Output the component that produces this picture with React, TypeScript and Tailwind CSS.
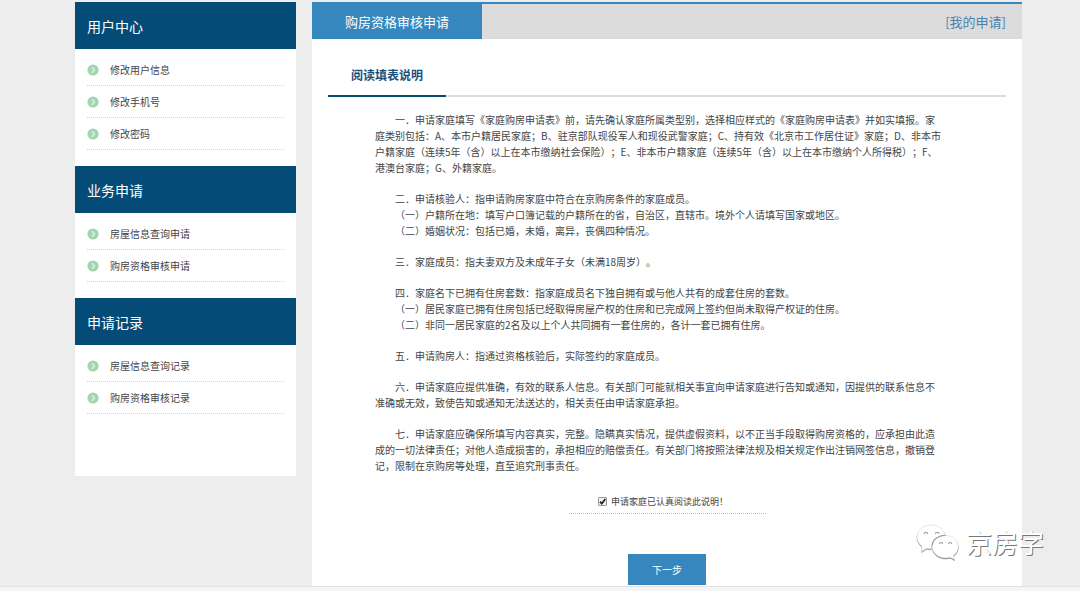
import React from "react";

const sections = [
  { title: "用户中心", items: ["修改用户信息", "修改手机号", "修改密码"] },
  { title: "业务申请", items: ["房屋信息查询申请", "购房资格审核申请"] },
  { title: "申请记录", items: ["房屋信息查询记录", "购房资格审核记录"] },
];

type Line = { text: string; indent?: boolean };

const paragraphs: Line[][] = [
  [
    { text: "一．申请家庭填写《家庭购房申请表》前，请先确认家庭所属类型别，选择相应样式的《家庭购房申请表》并如实填报。家", indent: true },
    { text: "庭类别包括：A、本市户籍居民家庭；B、驻京部队现役军人和现役武警家庭；C、持有效《北京市工作居住证》家庭；D、非本市" },
    { text: "户籍家庭（连续5年（含）以上在本市缴纳社会保险）；E、非本市户籍家庭（连续5年（含）以上在本市缴纳个人所得税）；F、" },
    { text: "港澳台家庭；G、外籍家庭。" },
  ],
  [
    { text: "二．申请核验人：指申请购房家庭中符合在京购房条件的家庭成员。", indent: true },
    { text: "（一）户籍所在地：填写户口簿记载的户籍所在的省，自治区，直辖市。境外个人请填写国家或地区。", indent: true },
    { text: "（二）婚姻状况：包括已婚，未婚，离异，丧偶四种情况。", indent: true },
  ],
  [{ text: "三．家庭成员：指夫妻双方及未成年子女（未满18周岁）。", indent: true }],
  [
    { text: "四．家庭名下已拥有住房套数：指家庭成员名下独自拥有或与他人共有的成套住房的套数。", indent: true },
    { text: "（一）居民家庭已拥有住房包括已经取得房屋产权的住房和已完成网上签约但尚未取得产权证的住房。", indent: true },
    { text: "（二）非同一居民家庭的2名及以上个人共同拥有一套住房的，各计一套已拥有住房。", indent: true },
  ],
  [{ text: "五．申请购房人：指通过资格核验后，实际签约的家庭成员。", indent: true }],
  [
    { text: "六．申请家庭应提供准确，有效的联系人信息。有关部门可能就相关事宜向申请家庭进行告知或通知，因提供的联系信息不", indent: true },
    { text: "准确或无效，致使告知或通知无法送达的，相关责任由申请家庭承担。" },
  ],
  [
    { text: "七．申请家庭应确保所填写内容真实，完整。隐瞒真实情况，提供虚假资料，以不正当手段取得购房资格的，应承担由此造", indent: true },
    { text: "成的一切法律责任；对他人造成损害的，承担相应的赔偿责任。有关部门将按照法律法规及相关规定作出注销网签信息，撤销登" },
    { text: "记，限制在京购房等处理，直至追究刑事责任。" },
  ],
];

function Bullet() {
  return (
    <svg viewBox="0 0 12 12" className="h-3 w-3 shrink-0" aria-hidden="true">
      <circle cx="6" cy="6" r="5.6" fill="#a0d6b0" />
      <path d="M4.8 3.2 7.6 6 4.8 8.8" fill="none" stroke="#e4f4e8" strokeWidth="1.2" />
    </svg>
  );
}

function Sidebar() {
  return (
    <nav className="w-[221px] shrink-0 self-start bg-white pb-[46px]">
      {sections.map((section) => (
        <section key={section.title}>
          <h2 className="flex h-[47px] items-center bg-[#054b77] px-3 text-sm text-white">{section.title}</h2>
          <ul className="px-3 pt-[5px] pb-4">
            {section.items.map((item) => (
              <li key={item} className="border-b border-dotted border-[#d4d4d4]">
                <a href="#" className="flex h-[31px] items-center gap-[11px] text-[10px] text-[#444]">
                  <Bullet />
                  {item}
                </a>
              </li>
            ))}
          </ul>
        </section>
      ))}
    </nav>
  );
}

function Watermark() {
  return (
    <div className="absolute right-9 bottom-[30px] flex items-center gap-1.5" aria-label="京房字">
      <svg viewBox="0 0 44 38" className="h-[38px] w-11 overflow-visible" aria-hidden="true">
        <g fill="#fff" stroke="#d8d8d8" strokeWidth=".6">
          <path
            d="M15 2C7.5 2 1 7 1 14c0 4 2.200 7.200 5 9.300L5.500 28.500l5.300-3.200c1.600.4 3 .6 4.600.5C15 17.500 21 12.500 29.500 12.500 28 6 22 2 15 2Z"
            className="drop-shadow-[0px_1px_0px_#999]"
          />
          <path
            d="M29.500 12.500c-7.300 0-13.200 5-13.200 11.200s5.900 11.200 13.200 11.200c1.700 0 3.300-.3 4.700-.7l4.300 2.300-1.200-4c3-2.100 5-5.200 5-8.800 0-6.200-5.600-11.200-12.800-11.200Z"
            className="drop-shadow-[0px_1px_0px_#888]"
          />
        </g>
        <g fill="none" stroke="#999" strokeWidth="1.1">
          <path d="M16.300 22c.3-5.500 6-9.500 13.200-9.700M8 11c.2-2.300 3.400-2.300 3.600 0M19.500 11c.2-2.300 3.400-2.300 3.600 0" />
          <path d="M23.500 21c.2-2 3-2 3.200 0M32.500 21c.2-2 3-2 3.200 0" />
        </g>
      </svg>
      <span className="text-[26px] leading-8 text-white [text-shadow:1px_1px_0px_#777]">京房字</span>
    </div>
  );
}

export default function App() {
  return (
    <div className="relative bg-[#f5f5f5] pb-1 font-['Noto_Sans_CJK_SC',sans-serif] [text-spacing-trim:space-all]">
      <div className="flex gap-4 border-b border-[#e2e2e2] bg-[#ededed] pt-0.5 pr-[58px] pl-[75px]">
        <Sidebar />
        <main className="min-w-0 flex-1 bg-white">
          <header className="flex h-[37px] justify-between border-t-2 border-[#3587be] bg-[#dcdcdc]">
            <h1 className="flex w-[170px] items-center justify-center bg-[#3587be] text-[13px] text-white">
              购房资格审核申请
            </h1>
            <a href="#" className="flex items-center px-4 text-[13px] text-[#4b82b0]">
              [我的申请]
            </a>
          </header>
          <div className="px-4 pt-4">
            <div className="flex border-b-2 border-[#dcdcdc]">
              <h2 className="-mb-0.5 flex h-[42px] w-[118px] items-center justify-center border-b-2 border-[#054b77] text-xs font-bold text-[#1d4f7c]">
                阅读填表说明
              </h2>
            </div>
            <article className="flex flex-col gap-[15px] pt-[15px] pl-[47px] text-[10px] leading-4 text-[#444]">
              {paragraphs.map((lines, index) => (
                <p key={index}>
                  {lines.map((line) => (
                    <span
                      key={line.text}
                      className={line.indent ? "block pl-5 whitespace-nowrap" : "block whitespace-nowrap"}
                    >
                      {line.text}
                    </span>
                  ))}
                </p>
              ))}
            </article>
            <form className="flex flex-col items-center" onSubmit={(event) => event.preventDefault()}>
              <label className="mt-4 flex h-6 w-[197px] items-center justify-center gap-1 border-b border-dotted border-[#bbb] pr-2 text-[9px] text-[#444]">
                <span className="grid">
                  <input
                    type="checkbox"
                    defaultChecked
                    className="peer col-start-1 row-start-1 size-[9px] appearance-none rounded-[1px] border border-[#999] bg-[#f1f1f1]"
                  />
                  <svg
                    viewBox="0 0 9 9"
                    className="pointer-events-none invisible col-start-1 row-start-1 size-[9px] peer-checked:visible"
                    aria-hidden="true"
                  >
                    <path d="M2 4.600 3.800 6.600 7.300 2" fill="none" stroke="#222" strokeWidth="1.700" />
                  </svg>
                </span>
                申请家庭已认真阅读此说明！
              </label>
              <button type="submit" className="mt-10 mb-px h-[31px] w-[78px] bg-[#3587be] text-[10px] text-white">
                下一步
              </button>
            </form>
          </div>
        </main>
      </div>
      <Watermark />
    </div>
  );
}
